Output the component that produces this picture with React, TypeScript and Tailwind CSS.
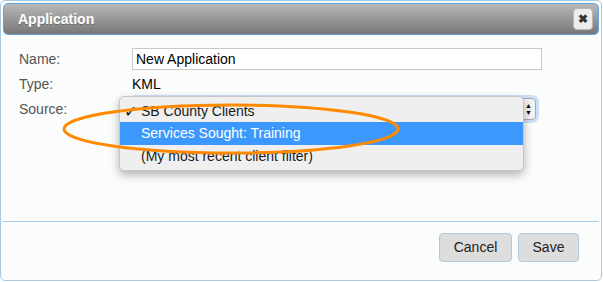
import React from "react";

export default function App() {
    return (
        <div className="w-[603px] h-[282px] bg-white font-['Liberation_Sans',Arial,sans-serif]">
            {/* dialog */}
            <div className="w-[602px] h-[281px] border border-[#a7cbe6] rounded-[5px] bg-[#fbfcfc] p-[2px] flex flex-col">
                {/* title bar */}
                <div className="h-[32px] shrink-0 rounded-[5px] border border-[#5fa3df] bg-gradient-to-b from-[#b9b9b9] to-[#777777] flex items-center justify-between pl-[14px] pr-[5px]">
                    <h2 className="text-[14px] font-bold text-white pt-[1px] [text-shadow:0_1px_0_rgba(0,0,0,0.25)]">Application</h2>
                    <button className="w-[20px] h-[22px] rounded-[4px] border border-[#b8b8b8] bg-[#ececec] flex items-center justify-center text-[#333] text-[12px] font-bold leading-none">
                        ✖
                    </button>
                </div>

                {/* body */}
                <div className="relative flex-1 pt-[13px] pl-[16px]">
                    <div className="grid grid-cols-[113px_1fr] gap-y-[3px] text-[14px]">
                        <div className="text-[#555] h-[22px] flex items-center">Name:</div>
                        <div className="w-[410px] h-[22px] border border-[#c9c9c9] bg-white flex items-center px-[3px] text-black">New Application</div>

                        <div className="text-[#555] h-[22px] flex items-center">Type:</div>
                        <div className="text-black h-[22px] flex items-center">KML</div>

                        <div className="text-[#555] h-[22px] flex items-center">Source:</div>
                        <div className="w-[404px] h-[22px] rounded-[4px] border border-[#a9a9a9] bg-[#f4f4f4] shadow-[0_0_0_3px_rgba(120,170,240,0.35)] flex items-center justify-end pr-[3px]">
                            <span className="flex flex-col items-center text-black text-[7px] leading-[7px]">
                                <span>▲</span>
                                <span>▼</span>
                            </span>
                        </div>
                    </div>

                    {/* open select menu */}
                    <div className="absolute left-[116px] top-[61px] w-[405px] rounded-[5px] border border-[#c6c6c6] bg-[#efefef] py-[2px] shadow-[0_4px_10px_rgba(0,0,0,0.3)] text-[14px] text-[#1a1a1a]">
                        <div className="h-[23px] flex items-center pt-[2px]">
                            <span className="w-[21px] pl-[4px] text-[16px] leading-none">✓</span>
                            <span>SB County Clients</span>
                        </div>
                        <div className="h-[23px] flex items-center bg-[#3d98fd] text-white pl-[21px]">Services Sought: Training</div>
                        <div className="h-[23px] flex items-center pl-[21px]">(My most recent client filter)</div>
                    </div>

                    {/* annotation */}
                    <svg className="absolute left-[53px] top-[63px] pointer-events-none" width="350" height="62" viewBox="0 0 350 62">
                        <ellipse cx="175" cy="31" rx="167" ry="24" fill="none" stroke="#ff8a00" strokeWidth="3" />
                    </svg>
                </div>

                {/* footer */}
                <div className="border-t border-[#a7cbe6] h-[57px] shrink-0 flex justify-end items-start gap-[6px] pt-[11px] pr-[20px]">
                    <button className="w-[73px] h-[29px] rounded-[4px] border border-[#b3c8da] bg-[#dddddd] text-[14px] text-[#222]">Cancel</button>
                    <button className="w-[61px] h-[29px] rounded-[4px] border border-[#b3c8da] bg-[#dddddd] text-[14px] text-[#222]">Save</button>
                </div>
            </div>
        </div>
    );
}
